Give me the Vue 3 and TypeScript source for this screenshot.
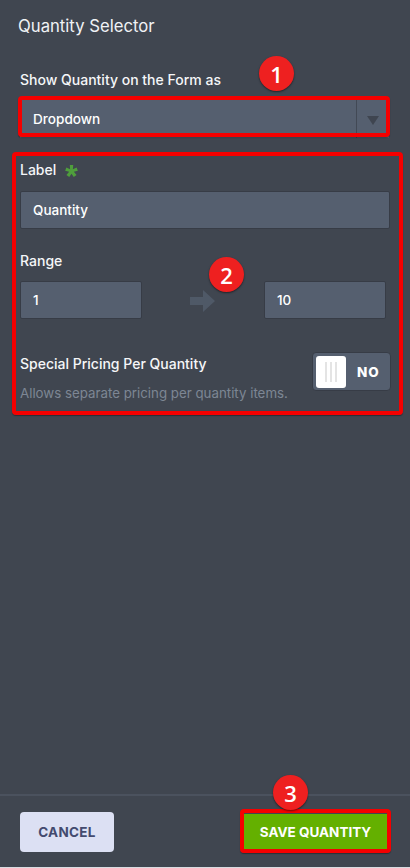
<script setup lang="ts">
const badges = [
  { n: 1, cls: 'b1' },
  { n: 2, cls: 'b2' },
  { n: 3, cls: 'b3' },
];
</script>

<template>
  <div class="panel">
    <main class="content">
      <h1 class="title">Quantity Selector</h1>
      <section class="show">
        <div class="label">Show Quantity on the Form as</div>
        <div class="select">
          <span class="select-text">Dropdown</span>
          <span class="caret"><i class="tri"></i></span>
        </div>
      </section>
      <section class="label-field">
        <div class="label">Label
          <svg class="star" width="15" height="15" viewBox="0 0 14 14"><path d="M5.4 1h3.200l-.3 3.800 3.500-1.500 1.100 3-3.700 1 2.500 3-2.600 1.900L7 9 4.900 12.200 2.300 10.300l2.500-3-3.700-1 1.100-3 3.500 1.500z" fill="#4f9e3c"/></svg>
        </div>
        <div class="input full">Quantity</div>
      </section>
      <section class="range">
        <div class="label">Range</div>
        <div class="range-row">
          <div class="input small">1</div>
          <svg class="arrow" width="26" height="22" viewBox="0 0 26 22"><path d="M0 7h13V0l12 11-12 11v-7H0z" fill="#4f5967"/></svg>
          <div class="input small">10</div>
        </div>
      </section>
      <section class="special">
        <div class="special-text">
          <div class="label">Special Pricing Per Quantity</div>
          <div class="hint">Allows separate pricing per quantity items.</div>
        </div>
        <div class="toggle">
          <span class="knob"><i></i><i></i><i></i></span>
          <span class="toggle-text">NO</span>
        </div>
      </section>
    </main>
    <footer class="footer">
      <button class="btn cancel">CANCEL</button>
      <button class="btn save">SAVE QUANTITY</button>
    </footer>

    <div class="mark m1"></div>
    <div class="mark m2"></div>
    <div class="mark m3"></div>
    <div v-for="b in badges" :key="b.n" class="badge" :class="b.cls">{{ b.n }}</div>
  </div>
</template>

<style scoped>
.panel {
  position: relative;
  width: 410px;
  height: 867px;
  background: #404650;
  display: flex;
  flex-direction: column;
  font-family: Inter, "Liberation Sans", sans-serif;
  color: #fff;
  overflow: hidden;
}
.content { flex: 1; padding: 0 20px; }
.title {
  margin: 16px 0 0 -2px;
  font-size: 16.7px;
  line-height: 20px;
  font-weight: 400;
  color: #f0f2f5;
}
.label { font-size: 14px; line-height: 18px; font-weight: 500; color: #f5f6f8; }
.show { margin-top: 35px; }
.select {
  margin-top: 11px;
  height: 38px;
  width: 369px;
  background: #555f6f;
  display: flex;
  align-items: center;
  justify-content: space-between;
  box-sizing: border-box;
}
.select-text { font-size: 13.6px; font-weight: 500; padding-left: 13px; }
.caret {
  width: 33px;
  height: 100%;
  border-left: 1px solid #424955;
  display: flex;
  align-items: center;
  justify-content: center;
  box-sizing: border-box;
}
.tri {
  width: 0; height: 0;
  border-left: 6px solid transparent;
  border-right: 6px solid transparent;
  border-top: 9px solid #3f4550;
  margin-top: 2px;
}
.label-field { margin-top: 23px; }
.label-field .label { display: flex; align-items: center; gap: 8px; }
.star { margin-top: 3px; }
.input {
  box-sizing: border-box;
  background: #555f6f;
  border: 1px solid #373c46;
  border-radius: 2px;
  display: flex;
  align-items: center;
  padding-left: 12px;
  font-size: 13.5px;
  font-weight: 500;
  height: 38px;
}
.full { margin-top: 12px; width: 370px; }
.range { margin-top: 23px; }
.range-row { margin-top: 11px; display: flex; align-items: center; width: 366px; justify-content: space-between; }
.small { width: 122px; }
.arrow { margin-top: 2px; }
.special {
  margin-top: 33px;
  display: flex;
  justify-content: space-between;
  align-items: flex-start;
  width: 371px;
}
.special-text .label { margin-top: 3px; }
.hint { margin-top: 12px; font-size: 13.3px; line-height: 16px; color: #7d8694; }
.toggle {
  box-sizing: border-box;
  width: 79px;
  height: 39px;
  background: #555f6f;
  border: 1px solid #373c46;
  border-radius: 4px;
  display: flex;
  align-items: center;
  padding-left: 3px;
}
.knob {
  width: 30px;
  height: 32px;
  background: #fff;
  border-radius: 3px;
  display: flex;
  justify-content: center;
  gap: 3px;
  align-items: center;
}
.knob i { width: 2px; height: 20px; background: #e4e4e4; }
.toggle-text { margin-left: 11px; font-size: 13.5px; font-weight: 800; letter-spacing: 0.8px; }
.footer {
  height: 73px;
  border-top: 2px solid #4b525e;
  box-sizing: border-box;
  padding: 16px 22px 0 20px;
  display: flex;
  justify-content: space-between;
  align-items: flex-start;
}
.btn {
  border: none;
  font-family: inherit;
  font-size: 13.5px;
  font-weight: 700;
  padding: 0;
}
.cancel { width: 94px; height: 40px; background: #dce0f3; color: #434a6e; border-radius: 4px; letter-spacing: 0.3px; }
.save { width: 145px; height: 36px; margin-top: 2px; background: #64b000; color: #fff; }
.mark { position: absolute; box-sizing: border-box; border: 4px solid #f50000; border-radius: 4px; box-shadow: 0 1px 1px rgba(0,0,0,.35); }
.m1 { left: 18px; top: 96px; width: 372px; height: 41px; }
.m2 { left: 12px; top: 152px; width: 391px; height: 263px; }
.m3 { left: 240px; top: 809px; width: 151px; height: 44px; }
.badge {
  position: absolute;
  width: 35px;
  height: 35px;
  border-radius: 50%;
  background: #ee2020;
  box-shadow: 0 1px 2px rgba(0,0,0,.5);
  display: flex;
  align-items: center;
  justify-content: center;
  font-family: "Open Sans", sans-serif;
  font-size: 22px;
  font-weight: 600;
}
.b1 { left: 259px; top: 56px; }
.b2 { left: 209px; top: 257px; }
.b3 { left: 273px; top: 775px; }
</style>

<style>
html, body { background: #d9dbe0; }
</style>
